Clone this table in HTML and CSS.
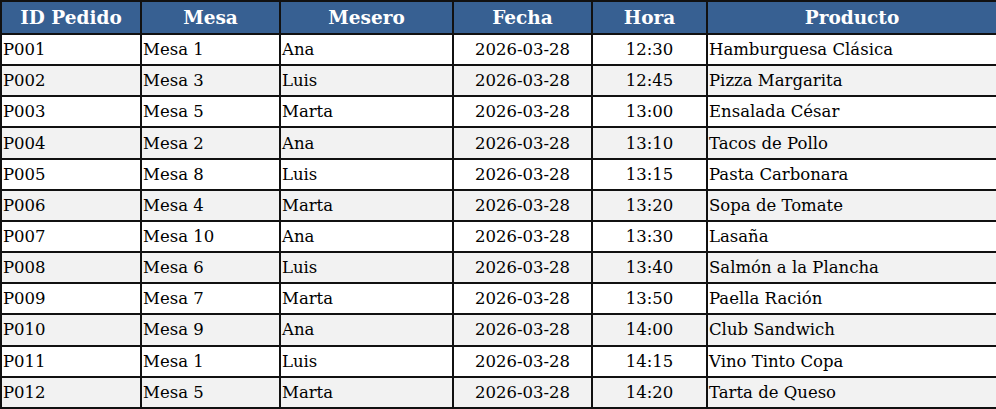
FILE: index.html
```html
<!DOCTYPE html>
<html lang="es">
<head>
<meta charset="utf-8">
<link rel="stylesheet" href="styles.css">
</head>
<body>
<table class="orders">
<colgroup>
<col class="c1"><col class="c2"><col class="c3"><col class="c4"><col class="c5"><col class="c6">
</colgroup>
<thead>
<tr><th>ID Pedido</th><th>Mesa</th><th>Mesero</th><th>Fecha</th><th>Hora</th><th>Producto</th></tr>
</thead>
<tbody>
<tr><td>P001</td><td>Mesa 1</td><td>Ana</td><td class="ctr">2026-03-28</td><td class="ctr">12:30</td><td>Hamburguesa Clásica</td></tr>
<tr><td>P002</td><td>Mesa 3</td><td>Luis</td><td class="ctr">2026-03-28</td><td class="ctr">12:45</td><td>Pizza Margarita</td></tr>
<tr><td>P003</td><td>Mesa 5</td><td>Marta</td><td class="ctr">2026-03-28</td><td class="ctr">13:00</td><td>Ensalada César</td></tr>
<tr><td>P004</td><td>Mesa 2</td><td>Ana</td><td class="ctr">2026-03-28</td><td class="ctr">13:10</td><td>Tacos de Pollo</td></tr>
<tr><td>P005</td><td>Mesa 8</td><td>Luis</td><td class="ctr">2026-03-28</td><td class="ctr">13:15</td><td>Pasta Carbonara</td></tr>
<tr><td>P006</td><td>Mesa 4</td><td>Marta</td><td class="ctr">2026-03-28</td><td class="ctr">13:20</td><td>Sopa de Tomate</td></tr>
<tr><td>P007</td><td>Mesa 10</td><td>Ana</td><td class="ctr">2026-03-28</td><td class="ctr">13:30</td><td>Lasaña</td></tr>
<tr><td>P008</td><td>Mesa 6</td><td>Luis</td><td class="ctr">2026-03-28</td><td class="ctr">13:40</td><td>Salmón a la Plancha</td></tr>
<tr><td>P009</td><td>Mesa 7</td><td>Marta</td><td class="ctr">2026-03-28</td><td class="ctr">13:50</td><td>Paella Ración</td></tr>
<tr><td>P010</td><td>Mesa 9</td><td>Ana</td><td class="ctr">2026-03-28</td><td class="ctr">14:00</td><td>Club Sandwich</td></tr>
<tr><td>P011</td><td>Mesa 1</td><td>Luis</td><td class="ctr">2026-03-28</td><td class="ctr">14:15</td><td>Vino Tinto Copa</td></tr>
<tr><td>P012</td><td>Mesa 5</td><td>Marta</td><td class="ctr">2026-03-28</td><td class="ctr">14:20</td><td>Tarta de Queso</td></tr>
</tbody>
</table>
</body>
</html>
```
FILE: styles.css
```css
html, body {
  margin: 0;
  padding: 0;
  background: #ffffff;
}
body {
  font-family: "DejaVu Serif", "Liberation Serif", serif;
  font-size: 16.5px;
  color: #000000;
}
.orders {
  border-collapse: collapse;
  table-layout: fixed;
  width: 996px;
}
.c1 { width: 140px; }
.c2 { width: 139px; }
.c3 { width: 173px; }
.c4 { width: 139px; }
.c5 { width: 115px; }
.c6 { width: 290px; }
.orders th,
.orders td {
  border: 2px solid #111111;
  padding: 0 1px;
  height: 29.17px;
  white-space: nowrap;
  overflow: hidden;
}
.orders th {
  background: #376092;
  color: #ffffff;
  font-weight: bold;
  font-size: 18.5px;
  text-align: center;
  height: 31px;
}
.orders tbody tr:nth-child(even) td {
  background: #f2f2f2;
}
.orders td.ctr {
  text-align: center;
}
```
